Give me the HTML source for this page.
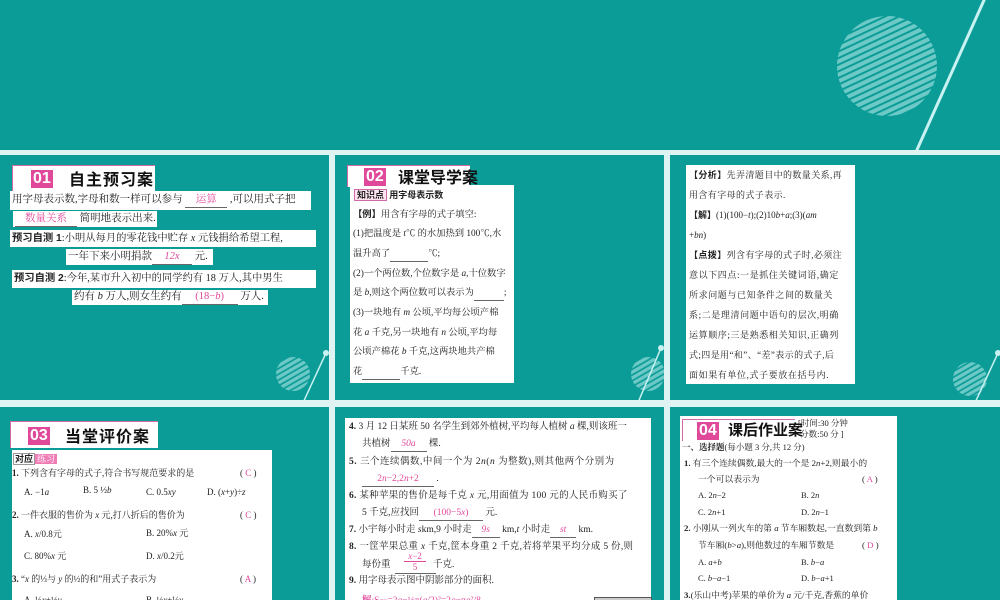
<!DOCTYPE html>
<html><head><meta charset="utf-8"><style>
*{margin:0;padding:0;box-sizing:border-box}
body{width:1000px;height:600px;overflow:hidden;background:#dff3f3;position:relative;font-family:"Liberation Serif","Noto Serif CJK SC",serif;color:#222}
.p{position:absolute;background:#0c9c98;overflow:hidden}
.a{position:absolute;white-space:nowrap}
.w{position:absolute;background:#fff}
.pk{color:#e0489a}
.u{display:inline-block;border-bottom:1px solid #666;text-align:center}
.b{font-weight:bold;font-family:"Liberation Sans","Noto Sans CJK SC",sans-serif}
.t{position:absolute;background:#fff;border:1px solid #d06aa8;border-right:none;border-bottom:none;white-space:nowrap}
.t .n{position:absolute;background:#e0489a;color:#fff;font:bold 16px "Liberation Sans",sans-serif;padding:0 2px;line-height:18px}
.t .h{position:absolute;font:bold 16px "Noto Sans CJK SC",sans-serif;line-height:22px;color:#111;white-space:nowrap}
.f{font-size:10px;line-height:14px}
</style></head><body>
<div class="p" style="left:0;top:0;width:1000px;height:150px">
<svg width="1000" height="150" style="position:absolute;left:0;top:0">
<defs><pattern id="h" width="6" height="6" patternUnits="userSpaceOnUse" patternTransform="rotate(-25)"><rect width="6" height="4" fill="#6cc9c6"/></pattern>
<clipPath id="c"><circle cx="887" cy="66" r="50"/></clipPath></defs>
<rect x="830" y="10" width="120" height="120" fill="url(#h)" clip-path="url(#c)"/>
<line x1="916" y1="152" x2="985" y2="-2" stroke="#c8f1f1" stroke-width="3"/>
</svg></div>

<div class="p" style="left:0;top:155px;width:329px;height:245px">
<svg width="329" height="245" style="position:absolute;left:0;top:0">
<defs><pattern id="h1" width="5" height="5" patternUnits="userSpaceOnUse" patternTransform="rotate(-30)"><rect width="5" height="3.3" fill="#6cc9c6"/></pattern></defs>
<circle cx="293" cy="219" r="17" fill="url(#h1)"/>
<line x1="326" y1="198" x2="302" y2="250" stroke="#c8f1f1" stroke-width="1.5"/>
<circle cx="326" cy="198" r="3" fill="#c8f1f1"/>
</svg>
<div class="t" style="left:12px;top:10px;width:143px;height:26px"><span class="n" style="left:18px;top:4px">01</span><span class="h" style="left:56px;top:1px;letter-spacing:1px">自主预习案</span></div>
<div class="w a f" style="left:10px;top:36px;width:301px;height:19px;padding:2px 2px;font-size:10.5px">用字母表示数,字母和数一样可以参与 <span class="u pk" style="width:42px">运算</span> ,可以用式子把</div>
<div class="w a f" style="left:13px;top:56px;width:144px;height:16px;padding:1px 2px;font-size:10.5px"><span class="u pk" style="width:62px">数量关系</span> 简明地表示出来.</div>
<div class="w a f" style="left:10px;top:75px;width:306px;height:17px;padding:2px 2px;font-size:10.3px"><b class="b">预习自测 1</b>:小明从每月的零花钱中贮存 <i>x</i> 元钱捐给希望工程,</div>
<div class="w a f" style="left:66px;top:94px;width:147px;height:16px;padding:1px 2px;font-size:10.5px">一年下来小明捐款<span class="u pk" style="width:40px"><i>12x</i></span> 元.</div>
<div class="w a f" style="left:12px;top:115px;width:304px;height:18px;padding:2px 2px;font-size:10.3px"><b class="b">预习自测 2</b>:今年,某市升入初中的同学约有 18 万人,其中男生</div>
<div class="w a f" style="left:72px;top:135px;width:196px;height:15px;padding:0 2px;font-size:10.5px">约有 <i>b</i> 万人,则女生约有<span class="u pk" style="width:56px">(18−<i>b</i>)</span> 万人.</div>
</div>

<div class="p" style="left:335px;top:155px;width:329px;height:245px">
<svg width="329" height="245" style="position:absolute;left:0;top:0">
<defs><pattern id="h2" width="5" height="5" patternUnits="userSpaceOnUse" patternTransform="rotate(-30)"><rect width="5" height="3.3" fill="#6cc9c6"/></pattern></defs>
<circle cx="313" cy="219" r="17" fill="url(#h2)"/>
<line x1="326" y1="193" x2="302" y2="250" stroke="#c8f1f1" stroke-width="1.5"/>
<circle cx="326" cy="193" r="3" fill="#c8f1f1"/>
</svg>
<div class="w" style="left:15px;top:30px;width:164px;height:198px"></div>
<div class="t" style="left:12px;top:10px;width:123px;height:22px"><span class="n" style="left:16px;top:2px">02</span><span class="h" style="left:50px;top:-1px">课堂导学案</span></div>
<div class="a f" style="left:19px;top:33px;font-size:9px"><span style="border:1px solid #d06aa8;background:#fbe3ef;padding:0 2px" class="b">知识点</span> <b class="b">用字母表示数</b></div>
<div class="a f" style="left:18px;top:52px;font-size:9.3px"><b class="b">【例】</b>用含有字母的式子填空:</div>
<div class="a f" style="left:18px;top:72px;font-size:9.3px">(1)把温度是 <i>t</i>℃ 的水加热到 100℃,水</div>
<div class="a f" style="left:18px;top:92px;font-size:9.3px">温升高了<span class="u" style="width:38px">&nbsp;</span>℃;</div>
<div class="a f" style="left:18px;top:112px;font-size:9.3px">(2)一个两位数,个位数字是 <i>a</i>,十位数字</div>
<div class="a f" style="left:18px;top:131px;font-size:9.3px">是 <i>b</i>,则这个两位数可以表示为<span class="u" style="width:30px">&nbsp;</span>;</div>
<div class="a f" style="left:18px;top:151px;font-size:9.3px">(3)一块地有 <i>m</i> 公顷,平均每公顷产棉</div>
<div class="a f" style="left:18px;top:171px;font-size:9.3px">花 <i>a</i> 千克,另一块地有 <i>n</i> 公顷,平均每</div>
<div class="a f" style="left:18px;top:190px;font-size:9.3px">公顷产棉花 <i>b</i> 千克,这两块地共产棉</div>
<div class="a f" style="left:18px;top:210px;font-size:9.3px">花<span class="u" style="width:38px">&nbsp;</span>千克.</div>
</div>

<div class="p" style="left:670px;top:155px;width:330px;height:245px">
<svg width="330" height="245" style="position:absolute;left:0;top:0">
<defs><pattern id="h3" width="5" height="5" patternUnits="userSpaceOnUse" patternTransform="rotate(-30)"><rect width="5" height="3.3" fill="#6cc9c6"/></pattern></defs>
<circle cx="300" cy="224" r="17" fill="url(#h3)"/>
<line x1="328" y1="198" x2="304" y2="250" stroke="#c8f1f1" stroke-width="1.5"/>
<circle cx="328" cy="198" r="3" fill="#c8f1f1"/>
</svg>
<div class="w" style="left:16px;top:10px;width:169px;height:219px"></div>
<div class="a f" style="left:19px;top:13px;font-size:9px;letter-spacing:.4px"><b class="b">【分析】</b>先弄清题目中的数量关系,再</div>
<div class="a f" style="left:19px;top:33px;font-size:9px;letter-spacing:.4px">用含有字母的式子表示.</div>
<div class="a f" style="left:19px;top:53px;font-size:9px"><b class="b">【解】</b>(1)(100−<i>t</i>);(2)10<i>b</i>+<i>a</i>;(3)(<i>am</i></div>
<div class="a f" style="left:19px;top:73px;font-size:9px">+<i>bn</i>)</div>
<div class="a f" style="left:19px;top:93px;font-size:9px;letter-spacing:.4px"><b class="b">【点拨】</b>列含有字母的式子时,必须注</div>
<div class="a f" style="left:19px;top:113px;font-size:9px;letter-spacing:.6px">意以下四点:一是抓住关键词语,确定</div>
<div class="a f" style="left:19px;top:133px;font-size:9px;letter-spacing:.6px">所求问题与已知条件之间的数量关</div>
<div class="a f" style="left:19px;top:153px;font-size:9px;letter-spacing:.6px">系;二是理清问题中语句的层次,明确</div>
<div class="a f" style="left:19px;top:173px;font-size:9px;letter-spacing:.6px">运算顺序;三是熟悉相关知识,正确列</div>
<div class="a f" style="left:19px;top:193px;font-size:9px;letter-spacing:.4px">式;四是用“和”、“差”表示的式子,后</div>
<div class="a f" style="left:19px;top:213px;font-size:9px;letter-spacing:.6px">面如果有单位,式子要放在括号内.</div>
</div>

<div class="p" style="left:0;top:407px;width:329px;height:193px">
<div class="w" style="left:12px;top:43px;width:260px;height:160px"></div>
<div class="t" style="left:10px;top:14px;width:148px;height:27px"><span class="n" style="left:17px;top:5px">03</span><span class="h" style="left:54px;top:2px;letter-spacing:1px">当堂评价案</span></div>
<div class="a f" style="left:13px;top:45px;font-size:9px"><span style="border:1px solid #999;padding:0 1px" class="b">对应</span><span style="background:#f07cb6;color:#fff;padding:0 2px">练习</span></div>
<div class="a f" style="left:12px;top:59px;font-size:9px;width:258px"><b>1.</b> 下列含有字母的式子,符合书写规范要求的是<span style="position:absolute;left:228px">( <span class="pk">C</span> )</span></div>
<div class="a f" style="left:24px;top:78px;font-size:9px">A. −1<i>a</i></div><div class="a f" style="left:83px;top:76px;font-size:9px">B. 5 ½<i>b</i></div><div class="a f" style="left:146px;top:78px;font-size:9px">C. 0.5<i>xy</i></div><div class="a f" style="left:207px;top:78px;font-size:9px">D. (<i>x</i>+<i>y</i>)÷<i>z</i></div>
<div class="a f" style="left:12px;top:101px;font-size:9px;width:258px"><b>2.</b> 一件衣服的售价为 <i>x</i> 元,打八折后的售价为<span style="position:absolute;left:228px">( <span class="pk">C</span> )</span></div>
<div class="a f" style="left:24px;top:120px;font-size:9px">A. <i>x</i>/0.8元</div><div class="a f" style="left:146px;top:119px;font-size:9px">B. 20%<i>x</i> 元</div>
<div class="a f" style="left:24px;top:142px;font-size:9px">C. 80%<i>x</i> 元</div><div class="a f" style="left:146px;top:142px;font-size:9px">D. <i>x</i>/0.2元</div>
<div class="a f" style="left:12px;top:165px;font-size:9px;width:258px"><b>3.</b> “<i>x</i> 的⅓与 <i>y</i> 的½的和”用式子表示为<span style="position:absolute;left:228px">( <span class="pk">A</span> )</span></div>
<div class="a f" style="left:24px;top:186px;font-size:9px">A. ⅓<i>x</i>+½<i>y</i></div><div class="a f" style="left:146px;top:186px;font-size:9px">B. ½<i>x</i>+⅓<i>y</i></div>
</div>

<div class="p" style="left:335px;top:407px;width:329px;height:193px">
<div class="w" style="left:10px;top:11px;width:306px;height:190px"></div>
<div class="a f" style="left:14px;top:13px;font-size:9.5px"><b>4.</b> 3 月 12 日某班 50 名学生到郊外植树,平均每人植树 <i>a</i> 棵,则该班一</div>
<div class="a f" style="left:27px;top:30px;font-size:9.5px">共植树<span class="u pk" style="width:36px"><i>50a</i></span> 棵.</div>
<div class="a f" style="left:14px;top:48px;font-size:9.5px;letter-spacing:.5px"><b>5.</b> 三个连续偶数,中间一个为 2<i>n</i>(<i>n</i> 为整数),则其他两个分别为</div>
<div class="a f" style="left:27px;top:65px;font-size:9.5px"><span class="u pk" style="width:72px">2<i>n</i>−2,2<i>n</i>+2</span> .</div>
<div class="a f" style="left:14px;top:82px;font-size:9.5px;letter-spacing:.3px"><b>6.</b> 某种苹果的售价是每千克 <i>x</i> 元,用面值为 100 元的人民币购买了</div>
<div class="a f" style="left:27px;top:99px;font-size:9.5px">5 千克,应找回<span class="u pk" style="width:64px">(100−5<i>x</i>)</span> 元.</div>
<div class="a f" style="left:14px;top:116px;font-size:9.5px"><b>7.</b> 小宇每小时走 <i>s</i>km,9 小时走<span class="u pk" style="width:28px"><i>9s</i></span> km,<i>t</i> 小时走<span class="u pk" style="width:26px"><i>st</i></span> km.</div>
<div class="a f" style="left:14px;top:133px;font-size:9.5px;letter-spacing:.3px"><b>8.</b> 一筐苹果总重 <i>x</i> 千克,筐本身重 2 千克,若将苹果平均分成 5 份,则</div>
<div class="a f" style="left:27px;top:151px;font-size:9.5px">每份重</div>
<div class="a pk" style="left:69px;top:144px;font-size:9px;line-height:10px;text-align:center;width:22px"><div style="border-bottom:1px solid #e0489a"><i>x</i>−2</div>5</div>
<div style="position:absolute;left:60px;top:166px;width:41px;border-top:1px solid #666"></div>
<div class="a f" style="left:98px;top:151px;font-size:9.5px">千克.</div>
<div class="a f" style="left:14px;top:167px;font-size:9.5px"><b>9.</b> 用字母表示图中阴影部分的面积.</div>
<div class="a f pk" style="left:27px;top:187px;font-size:9.5px"><b>解</b>:S<sub>阴</sub>=2<i>a</i>−½π(<i>a</i>/2)²=2<i>a</i>−π<i>a</i>²/8.</div>
<div style="position:absolute;left:259px;top:190px;width:58px;height:10px;background:#ccc;border:1px solid #555"></div>
</div>

<div class="p" style="left:670px;top:407px;width:330px;height:193px">
<div class="w" style="left:10px;top:9px;width:217px;height:190px"></div>
<div class="t" style="left:12px;top:12px;width:113px;height:22px;border-color:#d06aa8"><span class="n" style="left:14px;top:2px">04</span><span class="h" style="left:45px;top:-1px;font-size:15px">课后作业案</span></div>
<div class="a" style="left:128px;top:11px;font-size:8.5px;line-height:11px">[时间:30 分钟<br>&nbsp;分数:50 分 ]</div>
<div class="a f" style="left:12px;top:33px;font-size:8.5px"><b>一、选择题</b>(每小题 3 分,共 12 分)</div>
<div class="a f" style="left:14px;top:49px;font-size:8.8px"><b>1.</b> 有三个连续偶数,最大的一个是 2<i>n</i>+2,则最小的</div>
<div class="a f" style="left:28px;top:65px;font-size:8.8px;width:195px">一个可以表示为<span style="position:absolute;left:164px">( <span class="pk">A</span> )</span></div>
<div class="a f" style="left:28px;top:81px;font-size:8.5px">A. 2<i>n</i>−2</div><div class="a f" style="left:131px;top:81px;font-size:8.5px">B. 2<i>n</i></div>
<div class="a f" style="left:28px;top:98px;font-size:8.5px">C. 2<i>n</i>+1</div><div class="a f" style="left:131px;top:98px;font-size:8.5px">D. 2<i>n</i>−1</div>
<div class="a f" style="left:14px;top:114px;font-size:8.8px"><b>2.</b> 小刚从一列火车的第 <i>a</i> 节车厢数起,一直数到第 <i>b</i></div>
<div class="a f" style="left:28px;top:131px;font-size:8.8px;width:195px">节车厢(<i>b</i>&gt;<i>a</i>),则他数过的车厢节数是<span style="position:absolute;left:164px">( <span class="pk">D</span> )</span></div>
<div class="a f" style="left:28px;top:148px;font-size:8.5px">A. <i>a</i>+<i>b</i></div><div class="a f" style="left:131px;top:148px;font-size:8.5px">B. <i>b</i>−<i>a</i></div>
<div class="a f" style="left:28px;top:164px;font-size:8.5px">C. <i>b</i>−<i>a</i>−1</div><div class="a f" style="left:131px;top:164px;font-size:8.5px">D. <i>b</i>−<i>a</i>+1</div>
<div class="a f" style="left:14px;top:181px;font-size:8.8px"><b>3.</b>(乐山中考)苹果的单价为 <i>a</i> 元/千克,香蕉的单价</div>
</div>
</body></html>
